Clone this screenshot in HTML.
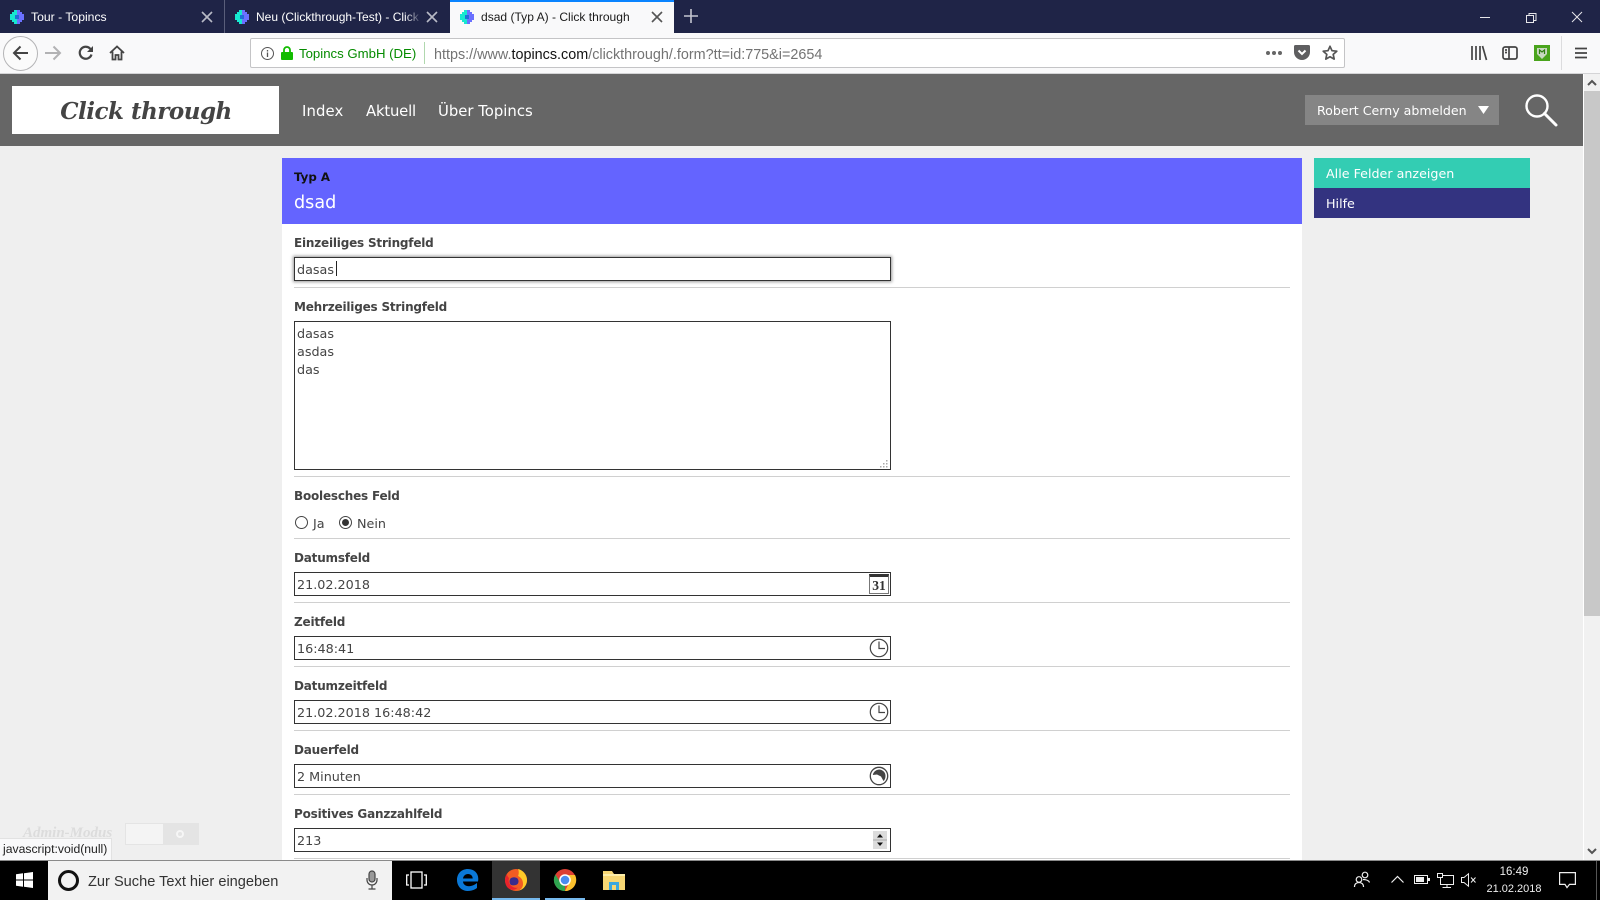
<!DOCTYPE html>
<html lang="de"><head><meta charset="utf-8"><title>dsad (Typ A) - Click through</title>
<style>
html,body{margin:0;padding:0;width:1600px;height:900px;overflow:hidden;background:#efefef;font-family:"DejaVu Sans","Liberation Sans",sans-serif;}
.a,.t,svg.i{position:absolute;}
.t{white-space:nowrap;line-height:20px;}
.ui{font-family:"Liberation Sans",sans-serif;}
.lb{font-size:12px;letter-spacing:-.2px;font-weight:bold;color:#444;left:294px;margin-top:1px;}
.hr{position:absolute;left:294px;width:996px;height:1px;background:#d0d0d0;}
.in{position:absolute;left:294px;width:595px;box-sizing:content-box;height:22px;border:1px solid #333;background:#fff;}
.v{font-size:12.75px;color:#444;left:297px;margin-top:2px;}
svg.i{overflow:visible;}
</style></head><body>
<svg width="0" height="0" style="position:absolute"><defs>
<symbol id="fav" viewBox="0 0 14 14"><path fill="#16e8d0" d="M0 4h2V2h2V0h3v14H4v-2H2v-2H0z"/><path fill="#6a70ff" d="M7 0h3v2h2v2h2v6h-2v2h-2v2H7z"/><path fill="#1f6fd8" d="M5 5h4v4H5z"/></symbol>
<symbol id="clock" viewBox="0 0 20 20"><circle cx="10" cy="10" r="8.7" fill="#fff" stroke="#444" stroke-width="1.2"/><path d="M10 3.5V10.5H16" fill="none" stroke="#444" stroke-width="1.2"/></symbol>
</defs></svg>

<!-- tab strip -->
<div class="a" style="left:0;top:0;width:1600px;height:33px;background:#1f2447"></div>
<div class="a" style="left:224px;top:0;width:1px;height:33px;background:#5a5e7a"></div>
<div class="a" style="left:450px;top:0;width:224px;height:33px;background:#f9f9fa"></div>
<div class="a" style="left:450px;top:0;width:224px;height:2px;background:#0a84ff"></div>
<svg class="i" style="left:10px;top:10px" width="14" height="14"><use href="#fav"/></svg>
<svg class="i" style="left:235px;top:10px" width="14" height="14"><use href="#fav"/></svg>
<svg class="i" style="left:460px;top:10px" width="14" height="14"><use href="#fav"/></svg>
<div class="t ui" style="left:31px;top:7px;font-size:12.2px;color:#fff">Tour - Topincs</div>
<div class="t ui" style="left:256px;top:7px;font-size:12px;color:#fff;width:165px;overflow:hidden">Neu (Clickthrough-Test) - Click through</div>
<div class="a" style="left:405px;top:5px;width:17px;height:24px;background:linear-gradient(90deg,rgba(31,36,71,0),#1f2447)"></div>
<div class="t ui" style="left:481px;top:7px;font-size:12.05px;color:#1a1a1a">dsad (Typ A) - Click through</div>
<svg class="i" style="left:202px;top:12px" width="10" height="10"><path d="M0 0L10 10M10 0L0 10" stroke="#b8bac6" stroke-width="1.6"/></svg>
<svg class="i" style="left:427px;top:12px" width="10" height="10"><path d="M0 0L10 10M10 0L0 10" stroke="#b8bac6" stroke-width="1.6"/></svg>
<svg class="i" style="left:652px;top:12px" width="10" height="10"><path d="M0 0L10 10M10 0L0 10" stroke="#555" stroke-width="1.6"/></svg>
<svg class="i" style="left:684px;top:9px" width="14" height="14"><path d="M7 0V14M0 7H14" stroke="#c4c5d0" stroke-width="1.6"/></svg>
<svg class="i" style="left:1480px;top:12px" width="110" height="12" fill="none" stroke="#e6e6ea"><path d="M0 5.5H10"/><path d="M46.5 3.5h7v7h-7zM49 3.5V1.5h7v7h-2.500"/><path d="M92 0L102 10M102 0L92 10"/></svg>

<!-- toolbar -->
<div class="a" style="left:0;top:33px;width:1600px;height:41px;background:#f9f9fa;box-sizing:border-box;border-bottom:1px solid #d4d4d6"></div>
<div class="a" style="left:3px;top:36px;width:33px;height:33px;border-radius:50%;border:1px solid #b4b4b6;background:#fbfbfb"></div>
<svg class="i" style="left:12px;top:45px" width="17" height="16" fill="none" stroke="#444" stroke-width="2"><path d="M16 8H2M8.500 1.500L2 8l6.500 6.500"/></svg>
<svg class="i" style="left:45px;top:45px" width="17" height="16" fill="none" stroke="#b2b2b4" stroke-width="2"><path d="M0 8H15M8.500 1.500L15 8l-6.500 6.500"/></svg>
<svg class="i" style="left:78px;top:45px" width="16" height="16" fill="none" stroke="#444" stroke-width="2.200"><path d="M13.500 9.500A6 6 0 1 1 12 3.500L14 5.500"/><path d="M15 1v6H9z" fill="#444" stroke="none"/></svg>
<svg class="i" style="left:109px;top:45px" width="16" height="16" fill="none" stroke="#444" stroke-width="1.800"><path d="M1 8L8 1.500 15 8M3.500 6.500V14.500H6.500V10H9.500V14.500H12.500V6.500"/></svg>
<div class="a" style="left:250px;top:38px;width:1095px;height:30px;box-sizing:border-box;border:1px solid #c4c4c6;border-radius:2px;background:#fff"></div>
<svg class="i" style="left:261px;top:47px" width="13" height="13" fill="none" stroke="#555"><circle cx="6.500" cy="6.500" r="6"/><path d="M6.500 5.500V10M6.500 3V4.500" stroke-width="1.300"/></svg>
<svg class="i" style="left:281px;top:46px" width="12" height="14"><path d="M3 6V4a3 3 0 0 1 6 0V6" fill="none" stroke="#12bc00" stroke-width="1.800"/><rect x="0" y="6" width="12" height="8" rx="1" fill="#12bc00"/></svg>
<div class="t ui" style="left:299px;top:44px;font-size:13.2px;color:#058b00">Topincs GmbH (DE)</div>
<div class="a" style="left:424px;top:42px;width:1px;height:22px;background:#b0d8ae"></div>
<div class="t ui" style="left:434px;top:45px;font-size:14.38px;color:#737373">https://www.<span style="color:#111">topincs.com</span>/clickthrough/.form?tt=id:775&amp;i=2654</div>
<svg class="i" style="left:1266px;top:51px" width="16" height="4" fill="#666"><circle cx="2" cy="2" r="2"/><circle cx="8" cy="2" r="2"/><circle cx="14" cy="2" r="2"/></svg>
<svg class="i" style="left:1294px;top:45px" width="16" height="15"><path d="M1.500 0h13A1.500 1.500 0 0 1 16 1.500V7A8 8 0 0 1 0 7V1.500A1.500 1.500 0 0 1 1.500 0z" fill="#5e5e60"/><path d="M4.500 5.500L8 9l3.500-3.500" fill="none" stroke="#fff" stroke-width="2"/></svg>
<svg class="i" style="left:1322px;top:45px" width="16" height="16"><path d="M8 1.300l2 4.400 4.800.500-3.600 3.200 1 4.700L8 11.700l-4.200 2.400 1-4.700L1.200 6.200 6 5.700z" fill="none" stroke="#555" stroke-width="1.700" stroke-linejoin="round"/></svg>
<svg class="i" style="left:1471px;top:46px" width="16" height="14" stroke="#444" stroke-width="1.700" fill="none"><path d="M1 0V14M5 0V14M9 0V14M11.500 0L15.500 14"/></svg>
<svg class="i" style="left:1502px;top:46px" width="16" height="14" fill="none" stroke="#444" stroke-width="1.700"><rect x="1" y="1" width="14" height="12" rx="2"/><path d="M7 1V13M3 4h2M3 6.500h2" /></svg>
<div class="a" style="left:1534px;top:45px;width:16px;height:16px;background:#4aa41c"></div>
<svg class="i" style="left:1537px;top:47px" width="10" height="12"><path d="M0 1h10v6L5 12 0 7z" fill="#c8d8c0"/><path d="M2.500 7V3l2.500 2 2.500-2v4" fill="none" stroke="#2e7d10" stroke-width="1.200"/></svg>
<div class="a" style="left:1561px;top:36px;width:1px;height:34px;background:#dcdcde"></div>
<svg class="i" style="left:1575px;top:47px" width="12" height="12" stroke="#444" stroke-width="1.800"><path d="M0 1.500H12M0 6H12M0 10.500H12"/></svg>

<!-- page header -->
<div class="a" style="left:0;top:74px;width:1583px;height:72px;background:#666"></div>
<div class="a" style="left:12px;top:86px;width:267px;height:48px;background:#fff"></div>
<div class="t" style="left:60px;top:99px;width:172px;text-align:center;font:italic bold 23px/26px 'DejaVu Serif','Liberation Serif',serif;color:#444;letter-spacing:-.5px">Click through</div>
<div class="t" style="left:302px;top:101px;font-size:14.85px;color:#fff;letter-spacing:.1px">Index</div>
<div class="t" style="left:366px;top:101px;font-size:14.85px;color:#fff;letter-spacing:-.2px">Aktuell</div>
<div class="t" style="left:438px;top:101px;font-size:14.85px;color:#fff">Über Topincs</div>
<div class="a" style="left:1305px;top:95px;width:194px;height:30px;background:#858585"></div>
<div class="t" style="left:1317px;top:101px;font-size:12.6px;color:#fff">Robert Cerny abmelden</div>
<svg class="i" style="left:1478px;top:106px" width="11" height="8"><path d="M0 0H11L5.500 8z" fill="#fff"/></svg>
<svg class="i" style="left:1525px;top:94px" width="33" height="33" fill="none" stroke="#fff"><circle cx="12" cy="12" r="10.500" stroke-width="2.400"/><path d="M19.500 19.500L31 31" stroke-width="3" stroke-linecap="round"/></svg>

<!-- main panel -->
<div class="a" style="left:282px;top:146px;width:1020px;height:714px;background:#fff"></div>
<div class="a" style="left:282px;top:146px;width:1020px;height:12px;background:#efefef"></div>
<div class="a" style="left:282px;top:158px;width:1020px;height:66px;background:#6464ff"></div>
<div class="t" style="left:294px;top:167px;font-size:11.8px;font-weight:bold;color:#111">Typ A</div>
<div class="t" style="left:294px;top:193px;font-size:17.6px;color:#fff">dsad</div>

<div class="t lb" style="top:232px">Einzeiliges Stringfeld</div>
<div class="in" style="top:257px;height:22px;box-shadow:0 0 3px 1px #999"></div>
<div class="t v" style="top:259px">dasas</div>
<div class="a" style="left:335.500px;top:261px;width:1px;height:15px;background:#222"></div>
<div class="hr" style="top:287px"></div>

<div class="t lb" style="top:296px">Mehrzeiliges Stringfeld</div>
<div class="in" style="top:321px;height:147px"></div>
<div class="t v" style="top:323px">dasas</div>
<div class="t v" style="top:341px">asdas</div>
<div class="t v" style="top:359px">das</div>
<svg class="i" style="left:880px;top:460px" width="8" height="8" fill="#aaa"><rect x="6" y="0" width="1.500" height="1.500"/><rect x="3" y="3" width="1.500" height="1.500"/><rect x="6" y="3" width="1.500" height="1.500"/><rect x="0" y="6" width="1.500" height="1.500"/><rect x="3" y="6" width="1.500" height="1.500"/><rect x="6" y="6" width="1.500" height="1.500"/></svg>
<div class="hr" style="top:476px"></div>

<div class="t lb" style="top:485px">Boolesches Feld</div>
<svg class="i" style="left:295px;top:516px" width="58" height="14"><circle cx="6.500" cy="6.500" r="6" fill="#fff" stroke="#444"/><circle cx="50.500" cy="6.500" r="6" fill="#fff" stroke="#444"/><circle cx="50.500" cy="6.500" r="3.500" fill="#333"/></svg>
<div class="t v" style="left:313px;top:513px">Ja</div>
<div class="t v" style="left:357px;top:513px">Nein</div>
<div class="hr" style="top:538px"></div>

<div class="t lb" style="top:547px">Datumsfeld</div>
<div class="in" style="top:572px"></div>
<div class="t v" style="top:574px">21.02.2018</div>
<div class="a" style="left:869px;top:574px;width:20px;height:20px;box-sizing:border-box;border:1px solid #777;border-top:3px solid #333;background:#fff"></div>
<div class="t" style="left:869px;top:576px;width:20px;text-align:center;font:bold 13.5px/20px 'Liberation Serif',serif;color:#333">31</div>
<div class="hr" style="top:602px"></div>

<div class="t lb" style="top:611px">Zeitfeld</div>
<div class="in" style="top:636px"></div>
<div class="t v" style="top:638px">16:48:41</div>
<svg class="i" style="left:869px;top:638px" width="20" height="20"><use href="#clock"/></svg>
<div class="hr" style="top:666px"></div>

<div class="t lb" style="top:675px">Datumzeitfeld</div>
<div class="in" style="top:700px"></div>
<div class="t v" style="top:702px">21.02.2018 16:48:42</div>
<svg class="i" style="left:869px;top:702px" width="20" height="20"><use href="#clock"/></svg>
<div class="hr" style="top:730px"></div>

<div class="t lb" style="top:739px">Dauerfeld</div>
<div class="in" style="top:764px"></div>
<div class="t v" style="top:766px">2 Minuten</div>
<svg class="i" style="left:869px;top:766px" width="20" height="20"><circle cx="10" cy="10" r="8.700" fill="#fff" stroke="#444" stroke-width="1.300"/><path d="M10 3.500A6.500 6.500 0 0 1 16.500 10C16.500 12 15.800 14 14.500 15L12 10.500 8 8.500 3.800 9A6.500 6.500 0 0 1 10 3.500z" fill="#444"/></svg>
<div class="hr" style="top:794px"></div>

<div class="t lb" style="top:803px">Positives Ganzzahlfeld</div>
<div class="in" style="top:828px"></div>
<div class="t v" style="top:830px">213</div>
<div class="a" style="left:873px;top:831px;width:14px;height:18px;background:#dcdcdc"></div>
<svg class="i" style="left:875px;top:832px" width="10" height="16"><path d="M2 5.500H8L5 2z" fill="#111"/><path d="M2 10.500H8L5 14z" fill="#111"/><path d="M-2 8H12" stroke="#aaa"/></svg>
<div class="hr" style="top:858px"></div>

<!-- sidebar buttons -->
<div class="a" style="left:1314px;top:158px;width:216px;height:30px;background:#33cdb3"></div>
<div class="a" style="left:1314px;top:188px;width:216px;height:30px;background:#333380"></div>
<div class="t" style="left:1326px;top:164px;font-size:12.7px;color:#fff">Alle Felder anzeigen</div>
<div class="t" style="left:1326px;top:194px;font-size:12.7px;color:#fff">Hilfe</div>

<!-- scrollbar -->
<div class="a" style="left:1583px;top:74px;width:1px;height:786px;background:#fff"></div>
<div class="a" style="left:1584px;top:74px;width:16px;height:786px;background:#f1f1f1"></div>
<div class="a" style="left:1584px;top:91px;width:16px;height:525px;background:#c8c8c8"></div>
<svg class="i" style="left:1587px;top:79px" width="10" height="7" fill="none" stroke="#555" stroke-width="2"><path d="M1 6L5 2l4 4"/></svg>
<svg class="i" style="left:1587px;top:848px" width="10" height="7" fill="none" stroke="#555" stroke-width="2"><path d="M1 1L5 5l4-4"/></svg>

<!-- admin toggle + status -->
<div class="t" style="left:23px;top:823px;font:italic bold 15px/20px 'Liberation Serif',serif;color:#dcdcdc">Admin-Modus</div>
<div class="a" style="left:125px;top:823px;width:74px;height:22px;box-sizing:border-box;border:1px solid #e4e4e4;background:#f4f4f4"></div>
<div class="a" style="left:163px;top:824px;width:35px;height:20px;background:#e4e4e4"></div>
<div class="a" style="left:176px;top:830px;width:8px;height:8px;box-sizing:border-box;border:2px solid #f6f6f6;border-radius:50%"></div>
<div class="a" style="left:0;top:838px;width:112px;height:22px;background:#f9f9fa;border-top:1px solid #e2e2e2;border-right:1px solid #e2e2e2;box-sizing:border-box"></div>
<div class="t ui" style="left:3px;top:840px;font-size:12.2px;line-height:18px;color:#222">javascript:void(null)</div>

<!-- taskbar -->
<div class="a" style="left:0;top:860px;width:1600px;height:40px;background:#000"></div>
<div class="a" style="left:0;top:860px;width:1600px;height:1px;background:#8a8a8a"></div>
<svg class="i" style="left:16px;top:872px" width="17" height="16" fill="#fff"><path d="M0 2.300L7 1.300V7.500H0zM8 1.200L17 0V7.500H8zM0 8.500H7V14.700L0 13.700zM8 8.500H17V16L8 14.800z"/></svg>
<div class="a" style="left:48px;top:861px;width:344px;height:39px;background:#f2f2f2"></div>
<div class="a" style="left:58px;top:870px;width:21px;height:21px;box-sizing:border-box;border:3px solid #111;border-radius:50%"></div>
<div class="t ui" style="left:88px;top:871.500px;font-size:14.6px;color:#333">Zur Suche Text hier eingeben</div>
<svg class="i" style="left:366px;top:870px" width="12" height="20" fill="none" stroke="#444" stroke-width="1.200"><rect x="3" y="1" width="6" height="11" rx="3" fill="#999"/><path d="M1 8V10A5 5 0 0 0 11 10V8M6 15V19M2.500 19H9.500"/></svg>
<svg class="i" style="left:406px;top:871px" width="21" height="18" fill="none" stroke="#fff" stroke-width="1.300"><rect x="5" y="1" width="11" height="16"/><path d="M3 4H0.700V14H3M18 4H20.300V14H18"/></svg>
<svg class="i" style="left:457px;top:869px" width="22" height="22"><path d="M11 0C4 0 0 5 0 11c0 7 5.500 11 10.500 11 3.500 0 7-1 9.500-3v-5c-2.500 2-5.500 3.200-8 3.200-3.500 0-5.800-1.800-6-4.700H21c1.500-7-3-12.500-10-12.500zM6 9.500C6.300 7 8.300 5 11 5c2.800 0 4.600 1.800 4.700 4.500z" fill="#0a78d7"/></svg>
<div class="a" style="left:492px;top:861px;width:48px;height:39px;background:#333"></div>
<div class="a" style="left:492px;top:898px;width:48px;height:2px;background:#76b9ed"></div>
<div class="a" style="left:545px;top:898px;width:40px;height:2px;background:#76b9ed"></div>
<svg class="i" style="left:505px;top:869px" width="22" height="22"><circle cx="11" cy="11" r="11" fill="#f25c23"/><path d="M13 0C18 1 22 6 22 11c0 3-1 5-2.500 7C18 20 15 22 11 22c4 0 7-3 7-7 0-5-3-7-5-8 1-2 1-5 0-7z" fill="#ffca28"/><path d="M6 9c2-1 4-1 6 0 2 2 2 5 0 6.500-2 1-4 1-6 .5C4 14 4 11 6 9z" fill="#3a2b8c"/><path d="M0 11c0-2 1-5 2-6 0 2 1 3 2 4-1 3 0 7 4 9 2 1 4 1 5 .5-3 3-7 3-10 .5C1 17 0 14 0 11z" fill="#e8222b"/></svg>
<svg class="i" style="left:554px;top:869px" width="22" height="22"><circle cx="11" cy="11" r="11" fill="#dd3f33"/><path d="M11 22A11 11 0 0 1 1.400 5.500L7 14.500 11 16z" fill="#2ea44f"/><path d="M11 22A11 11 0 0 0 21 6H11l4 8z" fill="#fbc02d"/><circle cx="11" cy="11" r="5.800" fill="#fff"/><circle cx="11" cy="11" r="4.300" fill="#4a8cf0"/></svg>
<svg class="i" style="left:603px;top:871px" width="22" height="19"><path d="M0 0H9L11 3H22V19H0z" fill="#f7d774"/><path d="M0 3H22V5H0z" fill="#fdeeaa"/><path d="M6 11H16V19H13V14H9V19H6z" fill="#3aa8e0"/></svg>

<!-- tray -->
<svg class="i" style="left:1354px;top:871px" width="16" height="17" fill="none" stroke="#eee" stroke-width="1.200"><circle cx="11" cy="4" r="2.800"/><circle cx="5" cy="8.500" r="2.800"/><path d="M.5 16c0-3 2-4.500 4.500-4.500S9.500 13 9.500 16M9 8.500c3 0 6 1 6.500 3"/></svg>
<svg class="i" style="left:1391px;top:875px" width="13" height="8" fill="none" stroke="#eee" stroke-width="1.200"><path d="M.5 7.500L6.500 1.500l6 6"/></svg>
<svg class="i" style="left:1414px;top:874px" width="16" height="11"><rect x=".5" y="1.500" width="13" height="8" fill="none" stroke="#eee"/><rect x="2" y="3" width="8" height="5" fill="#eee"/><rect x="14" y="4" width="2" height="3" fill="#eee"/></svg>
<svg class="i" style="left:1437px;top:873px" width="17" height="15" fill="none" stroke="#eee"><rect x=".5" y=".5" width="5" height="4"/><path d="M5.500 2.500H16.500V11.500H3.500V4.500M10 11.500V14.500M5.500 14.500H14"/></svg>
<svg class="i" style="left:1461px;top:873px" width="15" height="14" fill="none" stroke="#eee"><path d="M.5 4.500H3L7.500.8V13.200L3 9.500H.5z"/><path d="M10 4.500L14.500 9.500M14.500 4.500L10 9.500"/></svg>
<div class="t ui" style="left:1484px;top:862px;width:60px;text-align:center;font-size:11.5px;color:#eee">16:49</div>
<div class="t ui" style="left:1484px;top:879px;width:60px;text-align:center;font-size:11px;color:#eee">21.02.2018</div>
<svg class="i" style="left:1559px;top:872px" width="17" height="17" fill="none" stroke="#eee" stroke-width="1.200"><path d="M.6.6H16.400V12.400H10.500L8 15.600 6 12.400H.6z"/></svg>
<div class="a" style="left:1596px;top:861px;width:1px;height:39px;background:#555"></div>
</body></html>
